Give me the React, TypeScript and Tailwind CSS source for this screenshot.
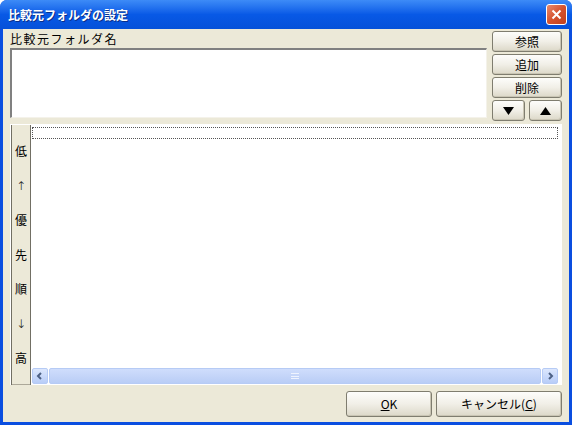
import React from "react";

const font = { fontFamily: '"Noto Sans CJK JP", "DejaVu Sans", sans-serif' };

function XpButton({ children, className = "" }: { children: React.ReactNode; className?: string }) {
  return (
    <div
      className={`flex items-center justify-center rounded-[3px] border border-[#7f7d6f] bg-gradient-to-b from-[#fdfdfb] via-[#f1efe7] to-[#dcd8c8] text-[12px] text-black shadow-[inset_-1px_-1px_0_#c9c5b4] ${className}`}
    >
      {children}
    </div>
  );
}

function ScrollArrow({ dir }: { dir: "left" | "right" }) {
  return (
    <div className="flex h-[16px] w-[16px] items-center justify-center rounded-[2px] border border-[#b6cbf5] bg-gradient-to-b from-[#dce7fd] to-[#b8cdf8]">
      <svg width="8" height="8" viewBox="0 0 8 8">
        {dir === "left" ? (
          <path d="M5 1 L2 4 L5 7" stroke="#4d6185" strokeWidth="2" fill="none" />
        ) : (
          <path d="M3 1 L6 4 L3 7" stroke="#4d6185" strokeWidth="2" fill="none" />
        )}
      </svg>
    </div>
  );
}

export default function App() {
  const order = ["低", "↑", "優", "先", "順", "↓", "高"];
  return (
    <div className="flex h-[425px] w-[572px] flex-col overflow-hidden rounded-t-[7px] bg-[#0a4ee0]" style={font}>
      {/* title bar */}
      <div className="flex h-[30px] items-center justify-between bg-gradient-to-b from-[#3d8bf7] via-[#0859e6] to-[#0551d9] pl-[8px] pr-[5px]">
        <span className="text-[12px] font-bold text-white [text-shadow:1px_1px_0_#0a2f8a]">比較元フォルダの設定</span>
        <div className="flex h-[21px] w-[21px] items-center justify-center rounded-[3px] border border-white bg-gradient-to-br from-[#e88a6c] via-[#d5522e] to-[#c0401c]">
          <svg width="11" height="11" viewBox="0 0 11 11">
            <path d="M1.5 1.5 L9.5 9.5 M9.5 1.5 L1.5 9.5" stroke="white" strokeWidth="2" />
          </svg>
        </div>
      </div>

      {/* client */}
      <div className="mx-[3px] mb-[3px] flex flex-1 flex-col bg-[#ece9d8] px-[7px] pt-[1px] pb-[5px]">
        {/* top section */}
        <div className="flex gap-[5px]">
          <div className="flex flex-1 flex-col">
            <div className="flex h-[18px] items-center text-[12px] tracking-[1.5px] text-black">比較元フォルダ名</div>
            <div className="h-[70px] border-t-2 border-l-2 border-r border-b border-t-[#808080] border-l-[#808080] border-r-[#f4f2ea] border-b-[#f4f2ea] bg-white" />
          </div>
          <div className="flex w-[70px] flex-col gap-[2px] pt-[1px]">
            <XpButton className="h-[21px]">参照</XpButton>
            <XpButton className="h-[21px]">追加</XpButton>
            <XpButton className="h-[21px]">削除</XpButton>
            <div className="flex gap-[4px]">
              <XpButton className="h-[21px] flex-1">
                <svg width="11" height="8" viewBox="0 0 11 8"><path d="M0 0 H11 L5.5 8 Z" fill="black" /></svg>
              </XpButton>
              <XpButton className="h-[21px] flex-1">
                <svg width="11" height="8" viewBox="0 0 11 8"><path d="M0 8 H11 L5.5 0 Z" fill="black" /></svg>
              </XpButton>
            </div>
          </div>
        </div>

        {/* list panel */}
        <div className="mt-[3px] flex h-[261px] border-t border-l border-[#ffffff] shadow-[inset_-1px_-1px_0_#aca899]">
          <div className="flex w-[20px] flex-col items-center border-r border-l border-[#716f64] pt-[9px] text-[12px] text-black">
            {order.map((c) => (
              <div
                key={c}
                className="flex h-[34.5px] items-center justify-center"
                style={c === "↑" || c === "↓" ? { fontFamily: '"DejaVu Sans", sans-serif', fontWeight: 300 } : undefined}
              >
                {c}
              </div>
            ))}
          </div>
          <div className="flex flex-1 flex-col bg-white pl-[1px] pt-[2px] pr-[4px]">
            <div className="h-[12px] border border-dotted border-[#555]" />
            <div className="flex-1" />
            <div className="mb-[1px] flex h-[16px] items-center gap-[1px]">
              <ScrollArrow dir="left" />
              <div className="flex h-[16px] flex-1 items-center justify-center rounded-[2px] border border-[#b6cbf5] bg-gradient-to-b from-[#cfddfc] to-[#b9cdf6]">
                <div className="flex h-[6px] w-[8px] flex-col justify-between">
                  <div className="h-[1px] bg-[#eef3fe]" />
                  <div className="h-[1px] bg-[#eef3fe]" />
                  <div className="h-[1px] bg-[#eef3fe]" />
                </div>
              </div>
              <ScrollArrow dir="right" />
            </div>
          </div>
        </div>

        {/* bottom buttons */}
        <div className="mt-[6px] flex justify-end gap-[4px]">
          <XpButton className="h-[26px] w-[86px]">
            <span><span className="underline">O</span>K</span>
          </XpButton>
          <XpButton className="h-[26px] w-[126px]">
            <span>キャンセル(<span className="underline">C</span>)</span>
          </XpButton>
        </div>
      </div>
    </div>
  );
}
